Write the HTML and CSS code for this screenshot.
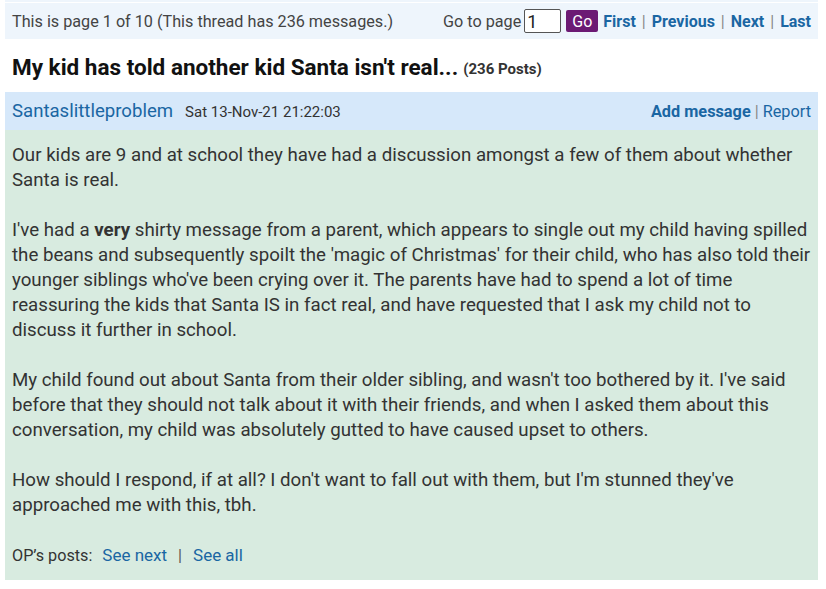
FILE: index.html
```html
<!DOCTYPE html>
<html>
<head>
<meta charset="utf-8">
<link rel="stylesheet" href="styles.css">
</head>
<body>
<div class="page">
  <div class="topline"></div>
  <div class="pager">
    <div class="pager-info">This is page 1 of 10 (This thread has 236 messages.)</div>
    <div class="pager-nav">
      <span class="goto">Go to page</span>
      <input class="page-input" type="text" value="1">
      <button class="go">Go</button>
      <a class="nav">First</a><span class="sep">|</span>
      <a class="nav">Previous</a><span class="sep">|</span>
      <a class="nav">Next</a><span class="sep">|</span>
      <a class="nav">Last</a>
    </div>
  </div>
  <h1 class="title">My kid has told another kid Santa isn't real... <span class="count">(236 Posts)</span></h1>
  <div class="post">
    <div class="post-head">
      <div class="author-line"><a class="author">Santaslittleproblem</a><span class="date">Sat 13-Nov-21 21:22:03</span></div>
      <div class="actions"><a class="add">Add message</a><span class="sep2">|</span><a class="report">Report</a></div>
    </div>
    <div class="post-body">
      <p>Our kids are 9 and at school they have had a discussion amongst a few of them about whether Santa is real.<br><br>I've had a <b>very</b> shirty message from a parent, which appears to single out my child having spilled the beans and subsequently spoilt the 'magic of Christmas' for their child, who has also told their younger siblings who've been crying over it. The parents have had to spend a lot of time reassuring the kids that Santa IS in fact real, and have requested that I ask my child not to discuss it further in school.<br><br>My child found out about Santa from their older sibling, and wasn't too bothered by it. I've said before that they should not talk about it with their friends, and when I asked them about this conversation, my child was absolutely gutted to have caused upset to others.<br><br>How should I respond, if at all? I don't want to fall out with them, but I'm stunned they've approached me with this, tbh.</p>
      <div class="op-posts"><span class="oplabel">OP’s posts:</span><a class="oplink">See next</a><span class="opsep">|</span><a class="oplink">See all</a></div>
    </div>
  </div>
</div>
</body>
</html>
```
FILE: styles.css
```css
* { box-sizing: border-box; }
body {
  margin: 0;
  font-family: Roboto, "Liberation Sans", sans-serif;
  color: #333;
  background: #fff;
}
.page {
  padding: 0 8px 0 5px;
}
.topline {
  height: 2px;
  background: #eef5fc;
  margin-bottom: 1px;
}
.pager {
  background: #eef5fc;
  height: 36px;
  display: flex;
  align-items: center;
  justify-content: space-between;
  padding: 0 7px 0 7px;
  font-size: 16px;
  color: #444;
}
.pager-info { font-size: 16.2px; }
.pager-nav {
  display: flex;
  align-items: center;
}
.goto { margin-right: 3px; font-size: 16.2px; }
.page-input {
  width: 37px;
  height: 24px;
  border: 1px solid #555;
  border-radius: 2px;
  font-family: Roboto, "Liberation Sans", sans-serif;
  font-size: 18px;
  padding: 0 2px;
  margin: 0 5px 0 0;
  color: #222;
  background: #fff;
}
.go {
  background: #6c1a74;
  color: #fff;
  border: none;
  border-radius: 2px;
  font-family: Roboto, "Liberation Sans", sans-serif;
  font-size: 16px;
  height: 22px;
  padding: 0 6px;
  margin-right: 5px;
}
.nav {
  font-weight: bold;
  color: #1a66a3;
}
.sep {
  color: #888;
  margin: 0 6px;
}
.title {
  margin: 0;
  height: 53px;
  display: flex;
  align-items: center;
  padding: 2px 7px 0;
  font-size: 22.5px;
  font-weight: bold;
  color: #111;
}
.count {
  font-size: 15px;
  color: #333;
  margin-left: 5px;
  margin-top: 4px;
}
.post-head {
  background: #d6e8fa;
  height: 38px;
  display: flex;
  align-items: center;
  justify-content: space-between;
  padding: 0 7px;
}
.author {
  color: #1a66a3;
  font-size: 18.6px;
}
.date {
  font-size: 15px;
  color: #333;
  margin-left: 12px;
}
.actions {
  font-size: 16.3px;
  color: #888;
}
.add {
  color: #1a66a3;
  font-weight: bold;
}
.sep2 { margin: 0 4px; }
.report { color: #1a66a3; }
.post-body {
  background: #d8ebe0;
  padding: 13px 7px 13px;
  height: 450px;
}
.post-body p {
  margin: 0;
  font-size: 18.7px;
  line-height: 25px;
  color: #333;
}
.op-posts {
  margin-top: 25px;
  font-size: 16.2px;
  line-height: 25px;
  color: #333;
}
.oplabel { margin-right: 10px; }
.oplink { color: #1a66a3; font-size: 17px; }
.opsep { margin: 0 11px; color: #555; }
```
